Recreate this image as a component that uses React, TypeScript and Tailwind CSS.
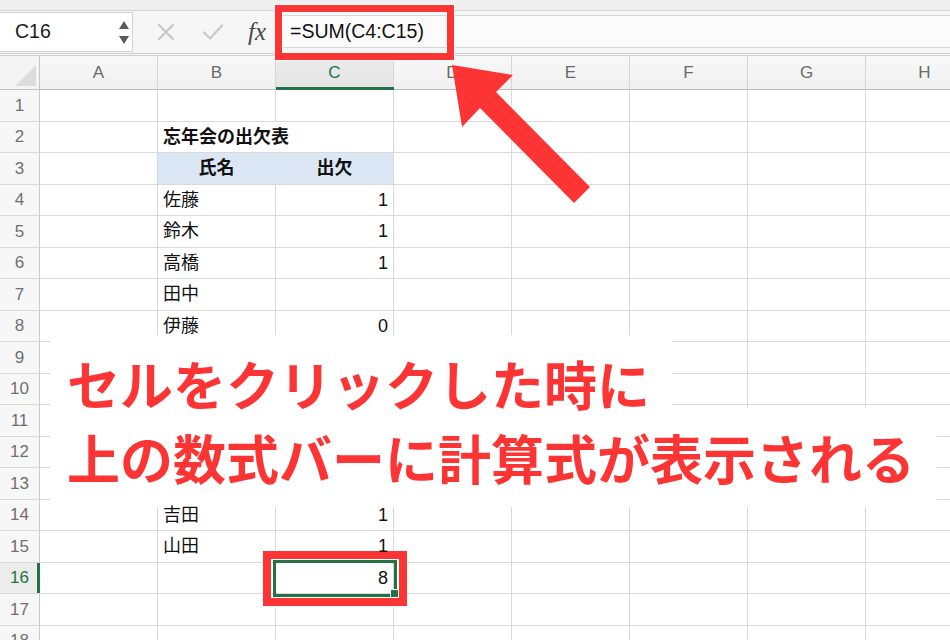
import React from "react";

type Cell = { text: string; bold?: boolean; align?: "left" | "right" | "center"; bg?: boolean; noRight?: boolean };

const COLS = ["A", "B", "C", "D", "E", "F", "G", "H"];

const DATA: Record<number, Record<string, Cell>> = {
  2: { B: { text: "忘年会の出欠表", bold: true, noRight: true } },
  3: {
    B: { text: "氏名", bold: true, align: "center", bg: true, noRight: true },
    C: { text: "出欠", bold: true, align: "center", bg: true },
  },
  4: { B: { text: "佐藤" }, C: { text: "1", align: "right" } },
  5: { B: { text: "鈴木" }, C: { text: "1", align: "right" } },
  6: { B: { text: "高橋" }, C: { text: "1", align: "right" } },
  7: { B: { text: "田中" } },
  8: { B: { text: "伊藤" }, C: { text: "0", align: "right" } },
  14: { B: { text: "吉田" }, C: { text: "1", align: "right" } },
  15: { B: { text: "山田" }, C: { text: "1", align: "right" } },
  16: { C: { text: "8", align: "right" } },
};

const ROWS = Array.from({ length: 18 }, (_, i) => i + 1);

function GridCell({ cell }: { cell?: Cell }) {
  const alignCls =
    cell?.align === "right" ? "justify-end pr-[5px]" : cell?.align === "center" ? "justify-center" : "justify-start pl-[5px]";
  return (
    <div
      className={`relative w-[118px] shrink-0 flex items-center border-b border-r whitespace-nowrap ${alignCls} ${
        cell?.bg ? "bg-[#dce7f5]" : "bg-white"
      } ${cell?.noRight ? (cell?.bg ? "border-b-[#d9d9d9] border-r-[#dce7f5]" : "border-b-[#d9d9d9] border-r-white") : "border-[#d9d9d9]"}`}
    >
      {cell && (
        <span
          className={`relative z-10 text-[18px] text-[#111] ${cell.bold ? "font-bold" : "font-normal"}`}
        >
          {cell.text}
        </span>
      )}
    </div>
  );
}

function Row({ n }: { n: number }) {
  const sel = n === 16;
  const h = n % 2 === 1 ? "h-[32px]" : "h-[31px]";
  const row = DATA[n] || {};
  return (
    <div className={`flex ${h}`}>
      <div
        className={`relative w-[40px] shrink-0 flex items-center justify-center border-b border-r border-b-[#d9d9d9] border-r-[#c9c9c9] text-[17px] ${
          sel ? "bg-[#ececec] text-[#217346]" : "bg-[#f7f7f7] text-[#6f6f6f]"
        }`}
      >
        {n}
        {sel && <div className="absolute right-[-1px] top-0 bottom-0 w-[3px] bg-[#217346]" />}
      </div>
      {COLS.map((c) => (
        <GridCell key={c} cell={row[c]} />
      ))}
    </div>
  );
}

export default function App() {
  return (
    <div className="relative w-[950px] h-[640px] overflow-hidden bg-white font-['Liberation_Sans','Noto_Sans_CJK_JP',sans-serif]">
      {/* top strip */}
      <div className="h-[11px] bg-[#efefef] border-b border-[#d6d6d6]" />
      {/* formula bar */}
      <div className="h-[45px] bg-[#f6f6f6] border-b-[3px] border-double border-[#cfcfcf] flex items-start">
        <div className="mt-[1px] w-[133px] h-[40px] bg-white border border-l-0 border-[#d2d2d2] flex items-center justify-between pl-[15px] pr-[2px]">
          <span className="text-[19.5px] text-[#1a1a1a]">C16</span>
          <svg width="12" height="26" viewBox="0 0 12 26">
            <polygon points="1,10 6,2 11,10" fill="#5b5b5b" />
            <polygon points="1,17 11,17 6,25" fill="#5b5b5b" />
          </svg>
        </div>
        <div className="flex items-center h-[41px] ml-[24px]">
          <svg width="18" height="18" viewBox="0 0 18 18">
            <path d="M2 2 L16 16 M16 2 L2 16" stroke="#c9c9c9" strokeWidth="2.4" strokeLinecap="round" />
          </svg>
          <svg width="22" height="18" viewBox="0 0 22 18" className="ml-[27px]">
            <path d="M2 9.5 L8 15.5 L20 2.5" stroke="#c9c9c9" strokeWidth="2.4" fill="none" strokeLinecap="round" strokeLinejoin="round" />
          </svg>
          <span className="ml-[24px] font-['Liberation_Serif',serif] italic text-[25px] text-[#4a4a4a] leading-none">fx</span>
        </div>
        <div className="mt-[4px] ml-[13px] flex-1 h-[33px] bg-[#fbfbfb] border border-r-0 border-[#d6d6d6] flex items-center pl-[10px]">
          <span className="text-[19.5px] text-[#111]">=SUM(C4:C15)</span>
        </div>
      </div>
      {/* column header */}
      <div className="flex h-[34px]">
        <div className="relative w-[40px] shrink-0 bg-[#f4f4f4] border-b border-r border-[#c4c4c4]">
          <svg className="absolute left-0 top-0" width="40" height="34" viewBox="0 0 40 34">
            <polygon points="15,30 36,30 36,9" fill="#dcdcdc" />
          </svg>
        </div>
        {COLS.map((c) => {
          const sel = c === "C";
          return (
            <div
              key={c}
              className={`relative w-[118px] shrink-0 flex items-center justify-center border-b border-r border-b-[#bdbdbd] border-r-[#d6d6d6] text-[17px] bg-gradient-to-b ${
                sel ? "from-[#ececec] to-[#e4e4e4] text-[#217346]" : "from-[#f8f8f8] to-[#f0f0f0] text-[#6a6a6a]"
              }`}
            >
              {c}
              {sel && <div className="absolute left-0 right-[-1px] bottom-[-1px] h-[3px] bg-[#217346]" />}
            </div>
          );
        })}
      </div>
      {/* rows */}
      <div className="flex flex-col">
        {ROWS.map((n) => (
          <Row key={n} n={n} />
        ))}
      </div>

      {/* selection on C16 */}
      <div className="absolute left-[273px] top-[560px] w-[124px] h-[37px] border-[3px] border-[#217346]" />
      <div className="absolute left-[390px] top-[589px] w-[9px] h-[9px] bg-[#217346] border border-white" />

      {/* annotation rectangles */}
      <div className="absolute left-[275px] top-[5px] w-[179px] h-[55px] border-[7px] border-[#fd3434] shadow-[0_0_0_1px_#fff,inset_0_0_0_1px_#fff]" />
      <div className="absolute left-[263px] top-[551px] w-[144px] h-[55px] border-[8px] border-[#fd3434] shadow-[0_0_0_1px_#fff,inset_0_0_0_1px_#fff]" />

      {/* arrow */}
      <svg className="absolute left-0 top-0 pointer-events-none" width="950" height="640" viewBox="0 0 950 640">
        <polygon points="452,65 513,75 496,92 590,187 574,203 480,108 462,127" fill="#fd3434" />
      </svg>

      {/* caption overlay */}
      <div className="absolute left-[50px] top-[335px] w-[622px] h-[80px] bg-white rounded-[6px]" />
      <div className="absolute left-[50px] top-[408px] w-[887px] h-[99px] bg-white rounded-[6px]" />
      <div className="absolute left-[67px] top-[346px] font-['Noto_Sans_CJK_JP',sans-serif] font-bold text-[53px] leading-[74px] text-[#fd3434] whitespace-nowrap">
        <div>セルをクリックした時に</div>
        <div>上の数式バーに計算式が表示される</div>
      </div>
    </div>
  );
}
